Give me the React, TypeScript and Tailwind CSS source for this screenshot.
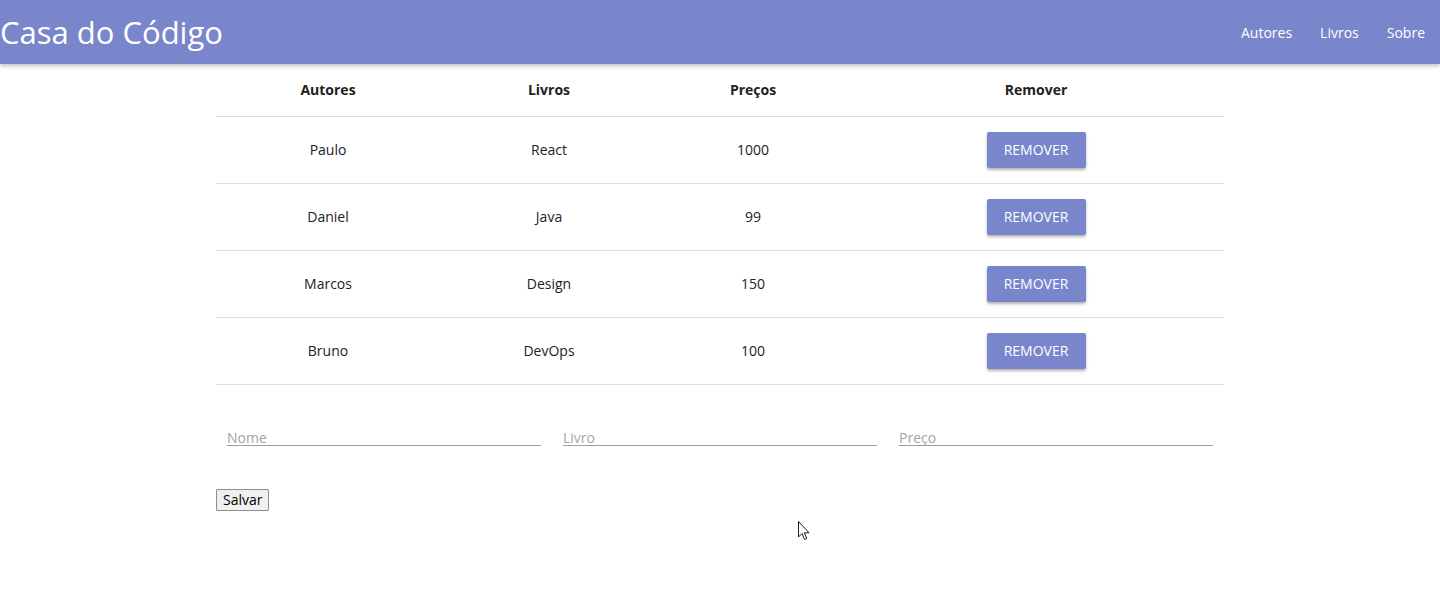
import React from "react"

const livros = [
  { autor: "Paulo", titulo: "React", preco: "1000" },
  { autor: "Daniel", titulo: "Java", preco: "99" },
  { autor: "Marcos", titulo: "Design", preco: "150" },
  { autor: "Bruno", titulo: "DevOps", preco: "100" },
]

function Header() {
  return (
    <nav className="h-16 bg-[#7986cb] flex items-center justify-between shadow-[0_2px_4px_rgba(0,0,0,0.25)] relative z-10">
      <a className="text-white text-[31px] leading-none">Casa do Código</a>
      <ul className="flex items-center h-full pr-[1px]">
        {["Autores", "Livros", "Sobre"].map((item) => (
          <li key={item} className="px-[14px] text-white text-[14px]">
            {item}
          </li>
        ))}
      </ul>
    </nav>
  )
}

function Tabela() {
  return (
    <table className="w-full border-collapse text-[14px] text-[#222]">
      <thead>
        <tr className="border-b border-[#dddddd]">
          <th className="w-[224px] h-[52px] font-bold text-center">Autores</th>
          <th className="w-[218px] font-bold text-center">Livros</th>
          <th className="w-[190px] font-bold text-center">Preços</th>
          <th className="font-bold text-center">Remover</th>
        </tr>
      </thead>
      <tbody>
        {livros.map((l) => (
          <tr key={l.autor} className="border-b border-[#dddddd]">
            <td className="h-[67px] text-center">{l.autor}</td>
            <td className="text-center">{l.titulo}</td>
            <td className="text-center">{l.preco}</td>
            <td className="text-center">
              <button className="h-9 w-[99px] bg-[#7986cb] text-white text-[14px] rounded-[2px] shadow-[0_2px_3px_rgba(0,0,0,0.3)] uppercase">
                Remover
              </button>
            </td>
          </tr>
        ))}
      </tbody>
    </table>
  )
}

function Formulario() {
  return (
    <form className="mt-[37px]">
      <div className="grid grid-cols-3">
        {["Nome", "Livro", "Preço"].map((campo) => (
          <div key={campo} className="px-[11px]">
            <input
              placeholder={campo}
              className="w-full h-[24px] border-b border-[#9e9e9e] text-[14px] outline-none placeholder:text-[#a8a39d] pt-[9px]"
            />
          </div>
        ))}
      </div>
      <button
        type="button"
        className="mt-[40px] h-[22px] px-[6px] border border-[#8f8f8f] bg-[#f0f0f0] text-[14px] text-black leading-none rounded-[1px]"
      >
        Salvar
      </button>
    </form>
  )
}

export default function App() {
  return (
    <div className="min-h-[609px] bg-white relative" style={{ fontFamily: "'Open Sans', 'Noto Sans', sans-serif" }}>
      <Header />
      <div className="w-[1008px] mx-auto">
        <Tabela />
        <Formulario />
      </div>
      <svg className="absolute left-[798px] top-[521px]" width="13" height="21" viewBox="0 0 13 21">
        <path d="M0.5 0.5 L0.5 16 L4 12.5 L6.5 18.5 L8.8 17.5 L6.3 11.8 L11 11.8 Z" fill="white" stroke="#1a1a2e" strokeWidth="1" strokeLinejoin="round" />
      </svg>
    </div>
  )
}
